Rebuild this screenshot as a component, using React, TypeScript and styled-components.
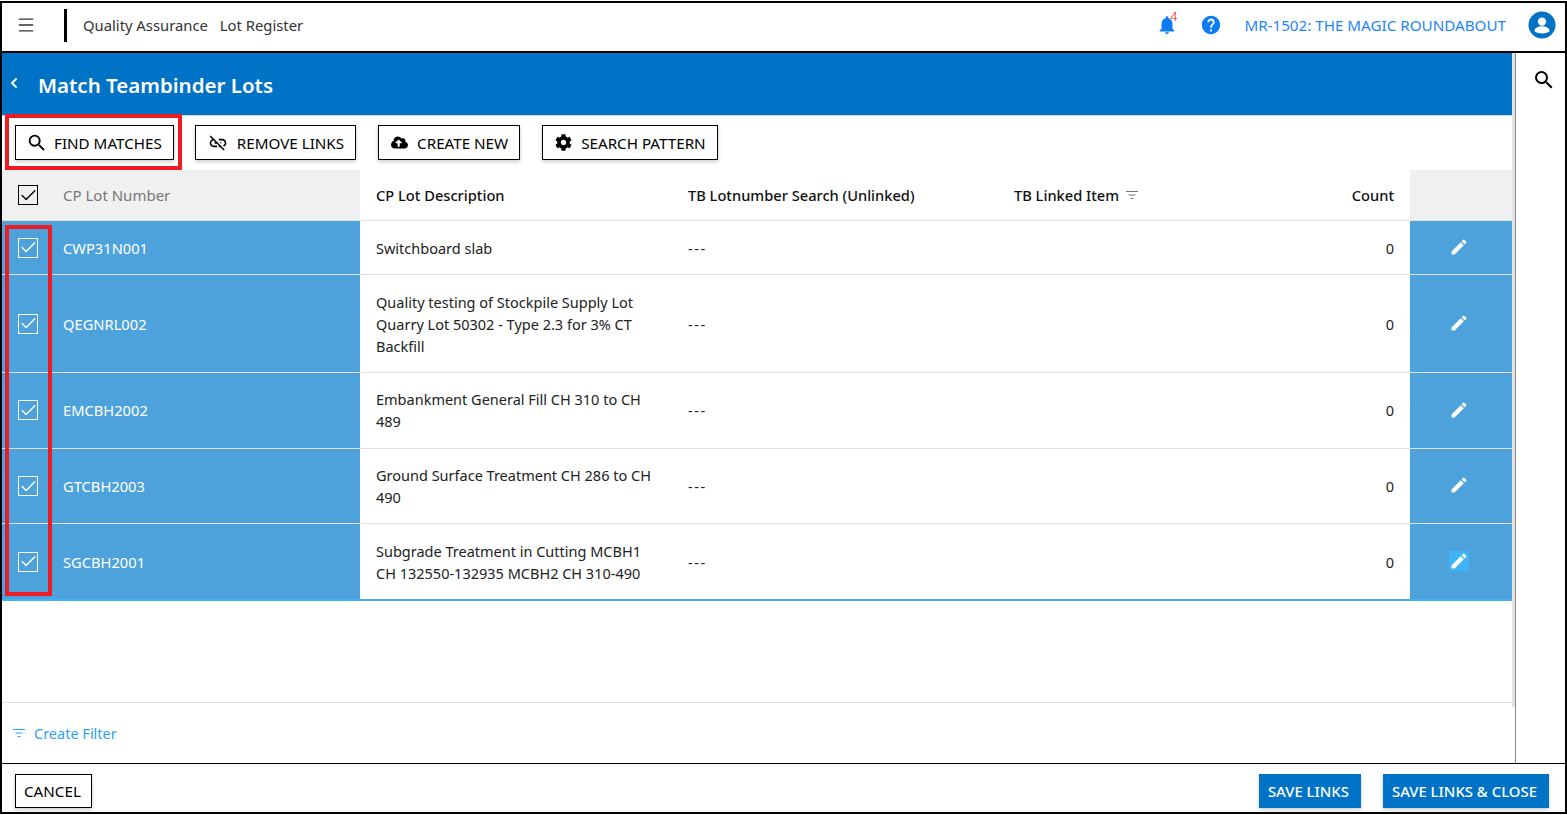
import React from "react";
import styled, { createGlobalStyle } from "styled-components";
import { Menu, ChevronLeft, Check } from "lucide-react";
import { FaCog, FaCloudUploadAlt } from "react-icons/fa";
import { MdLinkOff, MdSearch } from "react-icons/md";

const FONT = `"Noto Sans", "Open Sans", sans-serif`;
const BLUE = "#0073c7";
const ROW_BLUE = "#4da2dc";
const COLUMNS = "358px 312px 326px 412px 102px";

interface LotRow {
  number: string;
  description: string[];
  height: number;
  lift?: boolean;
  active?: boolean;
}

const rows: LotRow[] = [
  { number: "CWP31N001", description: ["Switchboard slab"], height: 54 },
  {
    number: "QEGNRL002",
    description: ["Quality testing of Stockpile Supply Lot", "Quarry Lot 50302 - Type 2.3 for 3% CT", "Backfill"],
    height: 98,
  },
  { number: "EMCBH2002", description: ["Embankment General Fill CH 310 to CH", "489"], height: 76, lift: true },
  { number: "GTCBH2003", description: ["Ground Surface Treatment CH 286 to CH", "490"], height: 75 },
  {
    number: "SGCBH2001",
    description: ["Subgrade Treatment in Cutting MCBH1", "CH 132550-132935 MCBH2 CH 310-490"],
    height: 75,
    active: true,
  },
];

function PencilIcon() {
  return (
    <svg width="20" height="20" viewBox="0 0 24 24" fill="#fff">
      <path d="M3 17.25V21h3.75L17.81 9.94l-3.75-3.75L3 17.25zM20.71 7.04a1 1 0 0 0 0-1.41l-2.34-2.34a1 1 0 0 0-1.41 0l-1.83 1.83 3.75 3.75 1.83-1.83z" />
    </svg>
  );
}

function App() {
  return (
    <>
      <GlobalStyle />
      <Page>
        <Header>
          <MenuButton>
            <Menu size={20} strokeWidth={1.6} />
          </MenuButton>
          <Divider />
          <Crumb>Quality Assurance</Crumb>
          <Crumb>Lot Register</Crumb>
          <HeaderRight>
            <BellWrap>
              <svg width="22" height="22" viewBox="0 0 24 24" fill="#0d7bf2">
                <path d="M12 22c1.1 0 2-.9 2-2h-4c0 1.1.9 2 2 2zm6-6v-5c0-3.07-1.63-5.64-4.5-6.32V4c0-.83-.67-1.5-1.5-1.5s-1.5.67-1.5 1.5v.68C7.64 5.36 6 7.92 6 11v5l-2 2v1h16v-1l-2-2z" />
              </svg>
              <BellCount>4</BellCount>
            </BellWrap>
            <svg width="22" height="22" viewBox="0 0 24 24" fill="#0d7bf2">
              <path d="M12 2C6.48 2 2 6.48 2 12s4.48 10 10 10 10-4.48 10-10S17.52 2 12 2zm1 17h-2v-2h2v2zm2.07-7.75-.9.92C13.45 12.9 13 13.5 13 15h-2v-.5c0-1.1.45-2.1 1.17-2.83l1.24-1.26c.37-.36.59-.86.59-1.41 0-1.1-.9-2-2-2s-2 .9-2 2H8c0-2.21 1.79-4 4-4s4 1.79 4 4c0 .88-.36 1.68-.93 2.25z" />
            </svg>
            <ProjectName>MR-1502: THE MAGIC ROUNDABOUT</ProjectName>
            <svg width="32" height="32" viewBox="0 0 32 32">
              <circle cx="16" cy="16" r="13.5" fill={BLUE} />
              <circle cx="16" cy="12.6" r="4.2" fill="#fff" />
              <path d="M8.5 21.5c0-2.8 5-4.2 7.5-4.2s7.5 1.4 7.5 4.2v.8c-2 1.5-4.6 2.2-7.5 2.2s-5.500-.7-7.500-2.200z" fill="#fff" />
            </svg>
          </HeaderRight>
        </Header>
        <Body>
          <Main>
            <Banner>
              <ChevronLeft size={16} strokeWidth={3} color="#fff" />
              <Title>Match Teambinder Lots</Title>
            </Banner>
            <Toolbar>
              <FindButton>
                <SearchGlyph size={22} />
                FIND MATCHES
              </FindButton>
              <ToolButton>
                <MdLinkOff size={20} />
                REMOVE LINKS
              </ToolButton>
              <ToolButton>
                <FaCloudUploadAlt size={17} />
                CREATE NEW
              </ToolButton>
              <ToolButton>
                <FaCog size={17} />
                SEARCH PATTERN
              </ToolButton>
            </Toolbar>
            <Table>
              <HeadRow>
                <HeadNumberCell>
                  <CheckBox $tone="dark">
                    <Check size={19} strokeWidth={1.7} />
                  </CheckBox>
                  CP Lot Number
                </HeadNumberCell>
                <HeadCell>CP Lot Description</HeadCell>
                <HeadCell>TB Lotnumber Search (Unlinked)</HeadCell>
                <HeadCountCell>
                  <span>
                    TB Linked Item
                    <FilterMark viewBox="0 0 14 10" width="14" height="10" stroke="#777">
                      <path d="M1 1.500h12M3.500 5h7M5.500 8.500h3" />
                    </FilterMark>
                  </span>
                  <span>Count</span>
                </HeadCountCell>
                <HeadActionCell />
              </HeadRow>
              {rows.map((row) => (
                <DataRow key={row.number} $height={row.height} $lift={row.lift} $active={row.active}>
                  <NumberCell>
                    <CheckBox $tone="light">
                      <Check size={19} strokeWidth={1.7} />
                    </CheckBox>
                    {row.number}
                  </NumberCell>
                  <TextCell>
                    <div>
                      {row.description.map((line) => (
                        <div key={line}>{line}</div>
                      ))}
                    </div>
                  </TextCell>
                  <DashCell>---</DashCell>
                  <CountCell>0</CountCell>
                  <ActionCell>
                    <EditButton $active={row.active}>
                      <PencilIcon />
                    </EditButton>
                  </ActionCell>
                </DataRow>
              ))}
              <CheckHighlight />
            </Table>
            <FindHighlight />
            <Spacer />
            <FilterBar>
              <svg width="14" height="14" viewBox="0 0 14 14" stroke="#2aa4f4" fill="none">
                <path d="M1 3.500h12M3.500 7h7M5.500 10.500h3" />
              </svg>
              Create Filter
            </FilterBar>
          </Main>
          <ScrollEdge>
            <ScrollThumb />
          </ScrollEdge>
          <SidePanel>
            <MdSearch size={24} color="#000" />
          </SidePanel>
        </Body>
        <Footer>
          <CancelButton>CANCEL</CancelButton>
          <FooterRight>
            <SaveButton>SAVE LINKS</SaveButton>
            <SaveButton>SAVE LINKS &amp; CLOSE</SaveButton>
          </FooterRight>
        </Footer>
      </Page>
    </>
  );
}

const GlobalStyle = createGlobalStyle`
  html, body {
    margin: 0;
    background: #fff;
    font-family: ${FONT};
  }
  * {
    box-sizing: border-box;
  }
`;

const Page = styled.div`
  width: 1567px;
  height: 813px;
  margin-top: 1px;
  border: 2px solid #000;
  display: flex;
  flex-direction: column;
  overflow: hidden;
  position: relative;
`;

const Header = styled.header`
  height: 50px;
  flex: none;
  display: flex;
  align-items: center;
  padding: 0 7px 4px 14px;
  border-bottom: 2px solid #000;
`;

const MenuButton = styled.div`
  display: flex;
  width: 20px;
  color: #333;
  margin-right: 28px;
`;

const Divider = styled.div`
  width: 3px;
  height: 33px;
  background: #000;
  margin-right: 16px;
`;

const Crumb = styled.span`
  font-size: 14.8px;
  color: #333;
  margin-right: 12px;
`;

const HeaderRight = styled.div`
  margin-left: auto;
  display: flex;
  align-items: center;
  gap: 22px;
`;

const BellWrap = styled.div`
  position: relative;
  display: flex;
`;

const BellCount = styled.span`
  position: absolute;
  top: -4px;
  right: 1px;
  font-size: 12.6px;
  font-weight: 300;
  line-height: 14px;
  color: #f00;
`;

const ProjectName = styled.span`
  font-size: 15.2px;
  color: #1f85f5;
  margin-right: -2px;
`;

const Body = styled.div`
  flex: 1;
  min-height: 0;
  display: flex;
`;

const Main = styled.main`
  width: 1510px;
  display: flex;
  flex-direction: column;
  position: relative;
`;

const Banner = styled.div`
  height: 62px;
  flex: none;
  background: ${BLUE};
  display: flex;
  align-items: center;
  padding: 2px 0 0 4px;
  gap: 16px;
  svg {
    margin-top: -4px;
  }
`;

const Title = styled.h1`
  margin: 0;
  font-size: 20.5px;
  font-weight: 600;
  color: #fff;
`;

const Toolbar = styled.div`
  height: 55px;
  flex: none;
  display: flex;
  align-items: center;
  gap: 22px;
  padding: 0 0 1px 13px;
  border-top: 1px solid #d4d4d4;
`;

const ToolButton = styled.button`
  height: 35px;
  padding: 0 11px 0 12px;
  display: flex;
  align-items: center;
  gap: 9px;
  border: 1px solid #000;
  background: #fff;
  color: #000;
  font-family: ${FONT};
  font-size: 15.2px;
  box-shadow: 0 2px 4px rgba(0, 0, 0, 0.2);
`;

const FindButton = styled(ToolButton)`
  margin-right: -1px;
`;

const SearchGlyph = styled(MdSearch)`
  margin: 0 -3px 0 -2px;
`;

const Table = styled.div`
  display: flex;
  flex-direction: column;
  position: relative;
  border-bottom: 2px solid #3cb4f5;
`;

const HeadRow = styled.div`
  display: grid;
  grid-template-columns: ${COLUMNS};
  height: 51px;
  border-bottom: 1px solid #e0e0e0;
`;

const HeadCell = styled.div`
  display: flex;
  align-items: center;
  padding: 0 16px;
  font-size: 14.65px;
  font-weight: 500;
  color: #111;
  white-space: nowrap;
`;

const HeadNumberCell = styled(HeadCell)`
  background: #f0f0f0;
  color: #777;
  font-size: 15px;
  font-weight: 400;
  gap: 25px;
`;

const HeadCountCell = styled(HeadCell)`
  justify-content: space-between;
`;

const HeadActionCell = styled.div`
  background: #f0f0f0;
`;

const FilterMark = styled.svg`
  fill: none;
  margin: 0 0 5px 6px;
  vertical-align: middle;
`;

const CheckBox = styled.span<{ $tone: "dark" | "light" }>`
  width: 20px;
  height: 20px;
  flex: none;
  display: flex;
  align-items: center;
  justify-content: center;
  border: 1px solid ${(p) => (p.$tone === "dark" ? "#000" : "#fff")};
  color: ${(p) => (p.$tone === "dark" ? "#000" : "#fff")};
  svg {
    flex: none;
  }
`;

const DataRow = styled.div<{ $height: number; $lift?: boolean; $active?: boolean }>`
  display: grid;
  grid-template-columns: ${COLUMNS};
  height: ${(p) => p.$height}px;
  border-bottom: ${(p) => (p.$active ? "0" : "1px solid #e0e0e0")};
  --cell-bottom: ${(p) => (p.$lift ? "1px" : "0px")};
`;

const TextCell = styled.div`
  display: flex;
  align-items: center;
  padding: 0 16px var(--cell-bottom);
  font-size: 14.5px;
  line-height: 22px;
  color: #222;
`;

const DashCell = styled(TextCell)`
  letter-spacing: 1.6px;
`;

const NumberCell = styled(TextCell)`
  background: ${ROW_BLUE};
  color: #fff;
  font-size: 14.7px;
  gap: 25px;
`;

const CountCell = styled(TextCell)`
  justify-content: flex-end;
`;

const ActionCell = styled.div`
  background: ${ROW_BLUE};
  display: flex;
  align-items: center;
  justify-content: center;
  padding: 0 4px 2px 0;
`;

const EditButton = styled.span<{ $active?: boolean }>`
  width: 20px;
  height: 20px;
  display: flex;
  background: ${(p) => (p.$active ? "#3cb4f5" : "transparent")};
`;

const CheckHighlight = styled.div`
  position: absolute;
  left: 3px;
  top: 55px;
  width: 47px;
  height: 371px;
  border: 4px solid #ed1c24;
  pointer-events: none;
`;

const FindHighlight = styled.div`
  position: absolute;
  left: 3px;
  top: 61px;
  width: 177px;
  height: 56px;
  border: 4px solid #ed1c24;
  pointer-events: none;
`;

const Spacer = styled.div`
  flex: 1;
`;

const FilterBar = styled.div`
  height: 61px;
  flex: none;
  display: flex;
  align-items: center;
  gap: 8px;
  padding-left: 10px;
  border-top: 1px solid #e0e0e0;
  color: #2aa4f4;
  font-size: 14.5px;
`;

const ScrollEdge = styled.div`
  width: 4px;
  flex: none;
  border-right: 1px solid #888;
`;

const ScrollThumb = styled.div`
  height: 654px;
  background: #e3e3e3;
`;

const SidePanel = styled.aside`
  flex: 1;
  display: flex;
  justify-content: center;
  align-items: flex-start;
  padding: 15px 0 0 7px;
`;

const Footer = styled.footer`
  height: 49px;
  flex: none;
  display: flex;
  align-items: flex-start;
  justify-content: space-between;
  padding: 10px 16px 0 13px;
  border-top: 1px solid #000;
`;

const CancelButton = styled.button`
  height: 34px;
  padding: 0 10px 0 8px;
  border: 1px solid #000;
  background: #fff;
  font-family: ${FONT};
  font-size: 15.2px;
  color: #000;
  box-shadow: 0 2px 4px rgba(0, 0, 0, 0.2);
`;

const FooterRight = styled.div`
  display: flex;
  gap: 22px;
`;

const SaveButton = styled.button`
  height: 34px;
  padding: 0 12px 0 9px;
  border: 0;
  background: ${BLUE};
  color: #fff;
  font-family: ${FONT};
  font-size: 14.9px;
  font-weight: 500;
  box-shadow: 0 2px 4px rgba(0, 0, 0, 0.2);
`;

export default App;
